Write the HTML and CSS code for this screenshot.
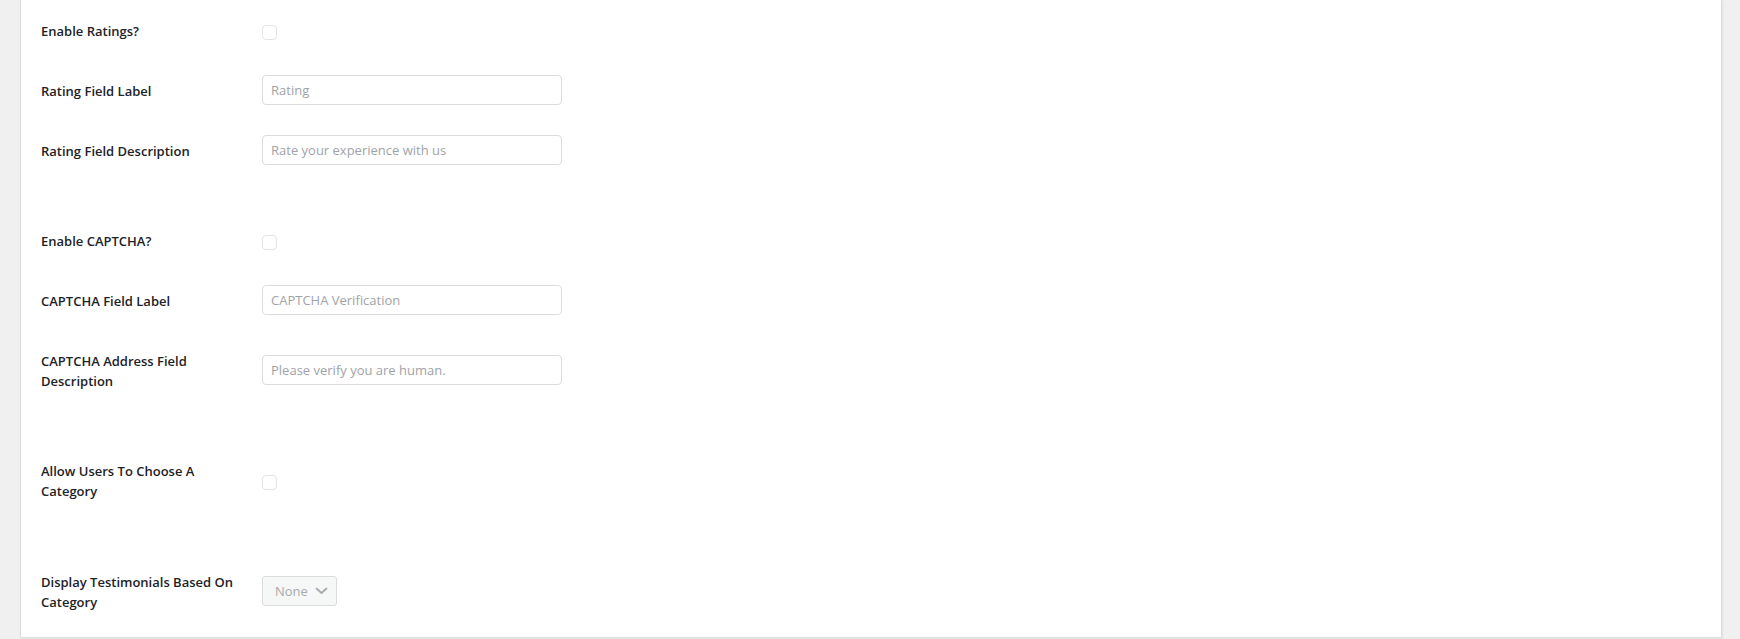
FILE: index.html
```html
<!DOCTYPE html>
<html lang="en">
<head>
<meta charset="utf-8">
<title>Testimonial form settings</title>
<link rel="stylesheet" href="styles.css">
</head>
<body>
<div class="wrap">
  <div class="card">
    <div class="section">
      <div class="row">
        <label class="row-label" for="enable-ratings">Enable Ratings?</label>
        <div class="row-field"><input class="check" type="checkbox" id="enable-ratings"></div>
      </div>
      <div class="row">
        <label class="row-label" for="rating-label">Rating Field Label</label>
        <div class="row-field"><input class="text" type="text" id="rating-label" placeholder="Rating"></div>
      </div>
      <div class="row">
        <label class="row-label" for="rating-desc">Rating Field Description</label>
        <div class="row-field"><input class="text" type="text" id="rating-desc" placeholder="Rate your experience with us"></div>
      </div>
    </div>

    <div class="section">
      <div class="row">
        <label class="row-label" for="enable-captcha">Enable CAPTCHA?</label>
        <div class="row-field"><input class="check" type="checkbox" id="enable-captcha"></div>
      </div>
      <div class="row">
        <label class="row-label" for="captcha-label">CAPTCHA Field Label</label>
        <div class="row-field"><input class="text" type="text" id="captcha-label" placeholder="CAPTCHA Verification"></div>
      </div>
      <div class="row">
        <label class="row-label" for="captcha-desc">CAPTCHA Address Field Description</label>
        <div class="row-field"><input class="text" type="text" id="captcha-desc" placeholder="Please verify you are human."></div>
      </div>
    </div>

    <div class="section">
      <div class="row">
        <label class="row-label" for="choose-cat">Allow Users To Choose A Category</label>
        <div class="row-field"><input class="check" type="checkbox" id="choose-cat"></div>
      </div>
    </div>

    <div class="section">
      <div class="row">
        <span class="row-label">Display Testimonials Based On Category</span>
        <div class="row-field">
          <div class="select">
            <span class="select-value">None</span>
            <svg class="select-chevron" width="13" height="8" viewBox="0 0 13 8" aria-hidden="true">
              <path d="M1.5 1.5 L6.5 6 L11.5 1.5" fill="none" stroke="#a7aaad" stroke-width="1.8" stroke-linecap="round" stroke-linejoin="round"/>
            </svg>
          </div>
        </div>
      </div>
    </div>
  </div>
</div>
</body>
</html>
```

FILE: styles.css
```css
html, body {
  margin: 0;
  padding: 0;
}

body {
  background: #f0f0f1;
  font-family: "Open Sans", "Noto Sans", "Liberation Sans", sans-serif;
  color: #1d2327;
  height: 639px;
  overflow: hidden;
}

.wrap {
  padding: 0 18px 0 20px;
}

.card {
  background: #fff;
  border: 1px solid #dcdcde;
  border-top: none;
  box-shadow: 1px 1px 2px rgba(0, 0, 0, 0.06);
  padding: 0 20px 6px 20px;
}

.section + .section {
  margin-top: 30px;
}

.section:last-child {
  margin-top: 31px;
}

.row {
  display: grid;
  grid-template-columns: 200px 300px;
  column-gap: 21px;
  align-items: center;
}

.row-label {
  align-self: start;
  padding: 21px 0 19px 0;
  font-size: 13px;
  font-weight: 600;
  line-height: 20px;
  color: #1d2327;
}

.row-field {
  display: flex;
  align-items: center;
}

.text {
  box-sizing: border-box;
  width: 300px;
  height: 30px;
  margin: 0;
  padding: 0 8px;
  border: 1px solid #dcdcde;
  border-radius: 4px;
  background: #fff;
  font-family: inherit;
  font-size: 13px;
  color: #2c3338;
  outline: none;
}

.text::placeholder {
  color: #a0a3a7;
  opacity: 1;
}

.check {
  -webkit-appearance: none;
  appearance: none;
  box-sizing: border-box;
  width: 15px;
  height: 15px;
  margin: 4px 0 0 0;
  border: 1px solid #e3e4e6;
  border-radius: 4px;
  background: #fff;
}

.select {
  box-sizing: border-box;
  width: 75px;
  height: 30px;
  display: flex;
  align-items: center;
  justify-content: space-between;
  padding: 0 8px 0 12px;
  border: 1px solid #dcdcde;
  border-radius: 3px;
  background: #f6f7f7;
}

.select-value {
  font-size: 13px;
  color: #a7aaad;
}

.select-chevron {
  display: block;
}
```
